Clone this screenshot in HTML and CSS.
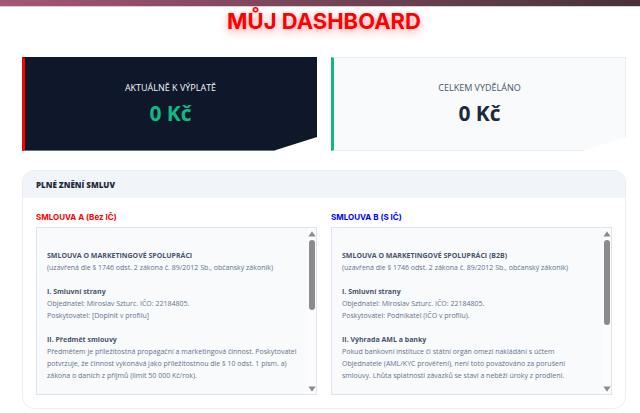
FILE: index.html
```html
<!DOCTYPE html>
<html lang="cs">
<head>
    <meta charset="UTF-8">
    <meta name="viewport" content="width=device-width, initial-scale=1.0">
    <title>Můj dashboard</title>
    <link rel="stylesheet" href="styles.css">
</head>
<body>
    <div class="topbar"></div>

    <main class="dashboard">
        <h1 class="title">MŮJ DASHBOARD</h1>

        <!-- statistiky -->
        <div class="stats">
            <div class="card card-dark">
                <div class="card-label">AKTUÁLNĚ K VÝPLATĚ</div>
                <div class="card-value">0 Kč</div>
            </div>
            <div class="card card-light">
                <div class="card-label">CELKEM VYDĚLÁNO</div>
                <div class="card-value">0 Kč</div>
            </div>
        </div>

        <!-- smlouvy -->
        <section class="panel">
            <h2 class="panel-header">PLNÉ ZNĚNÍ SMLUV</h2>
            <div class="panel-body">
                <div class="contract">
                    <h3 class="contract-title red">SMLOUVA A (Bez IČ)</h3>
                    <div class="contract-box">
                        <div class="contract-text">
                            <strong>SMLOUVA O MARKETINGOVÉ SPOLUPRÁCI</strong><br>
                            (uzavřená dle § 1746 odst. 2 zákona č. 89/2012 Sb., občanský zákoník)<br><br>
                            <strong>I. Smluvní strany</strong><br>
                            Objednatel: Miroslav Szturc. IČO: 22184805.<br>
                            Poskytovatel: [Doplnit v profilu]<br><br>
                            <strong>II. Předmět smlouvy</strong><br>
                            Předmětem je příležitostná propagační a marketingová činnost. Poskytovatel<br>
                            potvrzuje, že činnost vykonává jako příležitostnou dle § 10 odst. 1 písm. a)<br>
                            zákona o daních z příjmů (limit 50 000 Kč/rok).
                        </div>
                        <div class="scroll">
                            <svg class="arrow" viewBox="0 0 8 6"><path d="M4 0.3 7.6 5.6H0.4Z"/></svg>
                            <div class="track"><div class="thumb thumb-a"></div></div>
                            <svg class="arrow" viewBox="0 0 8 6"><path d="M4 5.7 7.6 0.4H0.4Z"/></svg>
                        </div>
                    </div>
                </div>
                <div class="contract">
                    <h3 class="contract-title blue">SMLOUVA B (S IČ)</h3>
                    <div class="contract-box">
                        <div class="contract-text">
                            <strong>SMLOUVA O MARKETINGOVÉ SPOLUPRÁCI (B2B)</strong><br>
                            (uzavřená dle § 1746 odst. 2 zákona č. 89/2012 Sb., občanský zákoník)<br><br>
                            <strong>I. Smluvní strany</strong><br>
                            Objednatel: Miroslav Szturc. IČO: 22184805.<br>
                            Poskytovatel: Podnikatel (IČO v profilu).<br><br>
                            <strong>II. Výhrada AML a banky</strong><br>
                            Pokud bankovní instituce či státní orgán omezí nakládání s účtem<br>
                            Objednatele (AML/KYC prověření), není toto považováno za porušení<br>
                            smlouvy. Lhůta splatnosti závazků se staví a neběží úroky z prodlení.
                        </div>
                        <div class="scroll">
                            <svg class="arrow" viewBox="0 0 8 6"><path d="M4 0.3 7.6 5.6H0.4Z"/></svg>
                            <div class="track"><div class="thumb thumb-b"></div></div>
                            <svg class="arrow" viewBox="0 0 8 6"><path d="M4 5.7 7.6 0.4H0.4Z"/></svg>
                        </div>
                    </div>
                </div>
            </div>
        </section>
    </main>
</body>
</html>
```
FILE: styles.css
```css
*{
    margin: 0;
    padding: 0;
    box-sizing: border-box;
}

body{
    background-color: #fff;
    font-family: "Open Sans", "Noto Sans", sans-serif;
    color: #1e293b;
}

.topbar{
    height: 7px;
    border-bottom: 1px solid #d9cfd3;
    background: linear-gradient(to right, #a55676, #463238);
    background-clip: padding-box;
}

.dashboard{
    padding: 0 14px 0 22px;
}

.title{
    padding: 1px 0 23px;
    font-family: Inter, sans-serif;
    font-size: 22px;
    line-height: 26px;
    font-weight: 700;
    text-align: center;
    color: #f00;
    text-shadow: 0 3px 8px rgba(255, 0, 0, 0.4);
}

/* karty */
.stats{
    display: grid;
    grid-template-columns: 1fr 1fr;
    gap: 14px;
    margin-bottom: 19px;
}

.card{
    padding: 22px 0 20px;
    border: 1px solid #e9eef4;
    border-left: 3px solid #10b981;
    background-color: #f8fafc;
    text-align: center;
    clip-path: polygon(0 0, 100% 0, 100% 85%, 85% 100%, 0 100%);
}

.card-dark{
    background-color: #0f172a;
    border-color: #0f172a;
    border-bottom-color: #64748b;
    border-left-color: #f00;
}

.card-label{
    font-size: 9px;
    line-height: 16px;
    color: #475569;
}

.card-dark .card-label{
    color: #f1f5f9;
}

.card-value{
    font-size: 21px;
    line-height: 34px;
    font-weight: 700;
}

.card-dark .card-value{
    color: #10b981;
}

/* panel se smlouvami */
.panel{
    border: 1px solid #e9edf3;
    border-radius: 12px;
    overflow: hidden;
}

.panel-header{
    padding: 0 13px;
    background-color: #f1f5f9;
    font-size: 8px;
    line-height: 27px;
    font-weight: 800;
}

.panel-body{
    display: grid;
    grid-template-columns: 1fr 1fr;
    gap: 14px;
    padding: 13px;
}

.contract-title{
    padding-bottom: 4px;
    font-family: Inter, sans-serif;
    font-size: 8px;
    line-height: 12px;
    font-weight: 700;
}

.red{
    color: #f00;
}

.blue{
    color: #00f;
}

.contract-box{
    display: flex;
    border: 1px solid #dde4ed;
    background-color: #f8fafc;
}

.contract-text{
    flex: 1;
    padding: 22px 4px 12px 10px;
    font-size: 7px;
    line-height: 12px;
    color: #64748b;
}

.contract-text strong{
    color: #475569;
}

.scroll{
    display: flex;
    flex-direction: column;
    align-items: center;
    width: 8px;
    padding: 3px 0 2px;
    background-color: #fcfcfd;
}

.arrow{
    width: 8px;
    height: 6px;
    fill: #8b8b8b;
}

.track{
    flex: 1;
    padding: 3px 0;
}

.thumb{
    width: 6px;
    border-radius: 3px;
    background-color: #8b8b8b;
}

.thumb-a{
    height: 70px;
}

.thumb-b{
    height: 85px;
}
```
